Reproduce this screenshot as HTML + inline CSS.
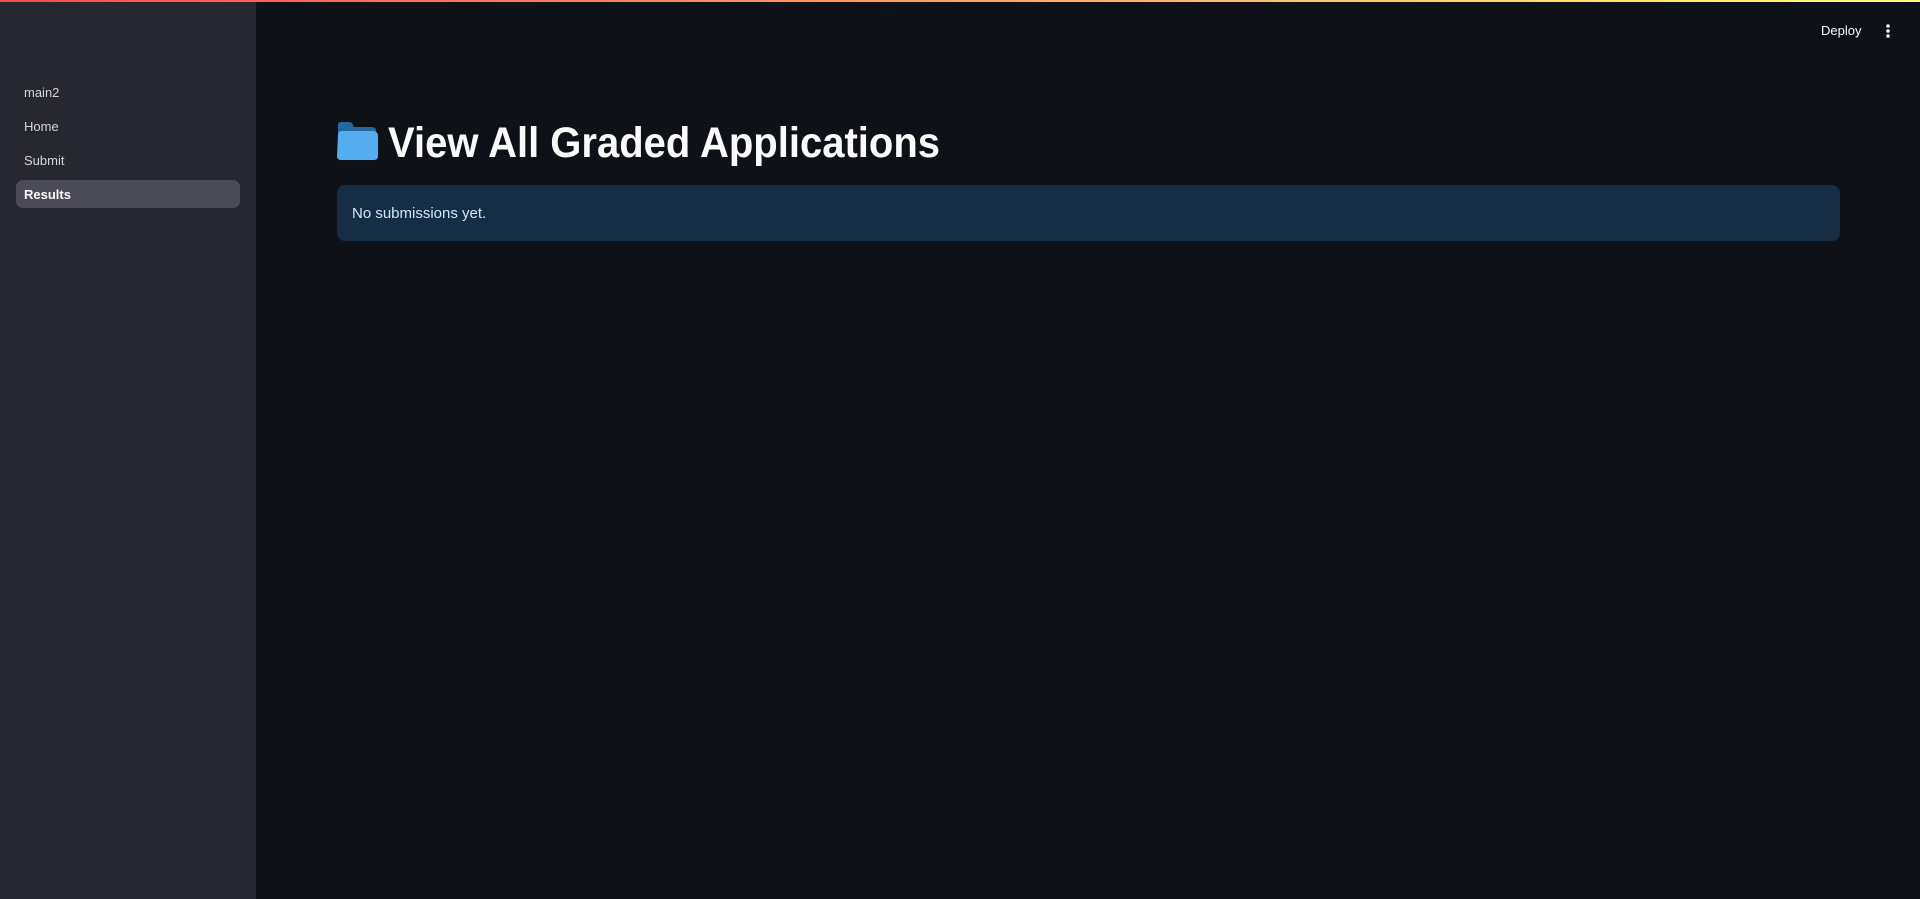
<!DOCTYPE html>
<html><head><style>
html,body{margin:0;padding:0;width:1920px;height:899px;overflow:hidden;background:#0e1117;font-family:"Liberation Sans",sans-serif;}
.bar{position:absolute;left:0;top:0;width:1920px;height:2px;background:linear-gradient(90deg,#ff4b4b,#fffd80);z-index:5}
.side{position:absolute;left:0;top:0;width:256px;height:899px;background:#262730}
.item{position:absolute;left:16px;width:224px;height:28px;line-height:28px;padding-left:8px;box-sizing:border-box;color:#d5d6da;font-size:13px}
.item.act{background:#4a4b56;border-radius:7px;color:#fafafa;font-weight:bold}
.info{position:absolute;left:337px;top:185px;width:1503px;height:56px;background:#172d43;border-radius:8px;color:#c7ebff;font-size:15px;line-height:57px;padding-left:15px;box-sizing:border-box}
.deploy{position:absolute;left:1821px;top:23px;color:#fafafa;font-size:13px}
</style></head><body>
<div class="bar"></div>
<div class="side">
<div class="item" style="top:79px">main2</div>
<div class="item" style="top:113px">Home</div>
<div class="item" style="top:147px">Submit</div>
<div class="item act" style="top:180px;line-height:29px">Results</div>
</div>
<svg style="position:absolute;left:336px;top:119px" width="44" height="44" viewBox="0 0 44 44">
<path d="M2 6 Q2 3 5 3 H13 Q16 3 17 6 L18 8 H36 Q40 8 40 12 V20 H2 Z" fill="#2468a0"/>
<path d="M2 16 Q2 12 6 12 H37 Q42 12 42 17 V37 Q42 41 38 41 H5 Q1 41 1 37 Z" fill="#55acee"/>
</svg>
<svg style="position:absolute;left:387px;top:118px" width="600" height="50">
<text x="1" y="39" font-family="Liberation Sans, sans-serif" font-weight="bold" font-size="43" fill="#fafafa" textLength="552" lengthAdjust="spacingAndGlyphs">View All Graded Applications</text>
</svg>
<div class="info">No submissions yet.</div>
<div class="deploy">Deploy</div>
<svg style="position:absolute;left:1884px;top:23px" width="8" height="16"><circle cx="4" cy="3" r="1.8" fill="#fafafa"/><circle cx="4" cy="8" r="1.8" fill="#fafafa"/><circle cx="4" cy="13" r="1.8" fill="#fafafa"/></svg>
</body></html>
